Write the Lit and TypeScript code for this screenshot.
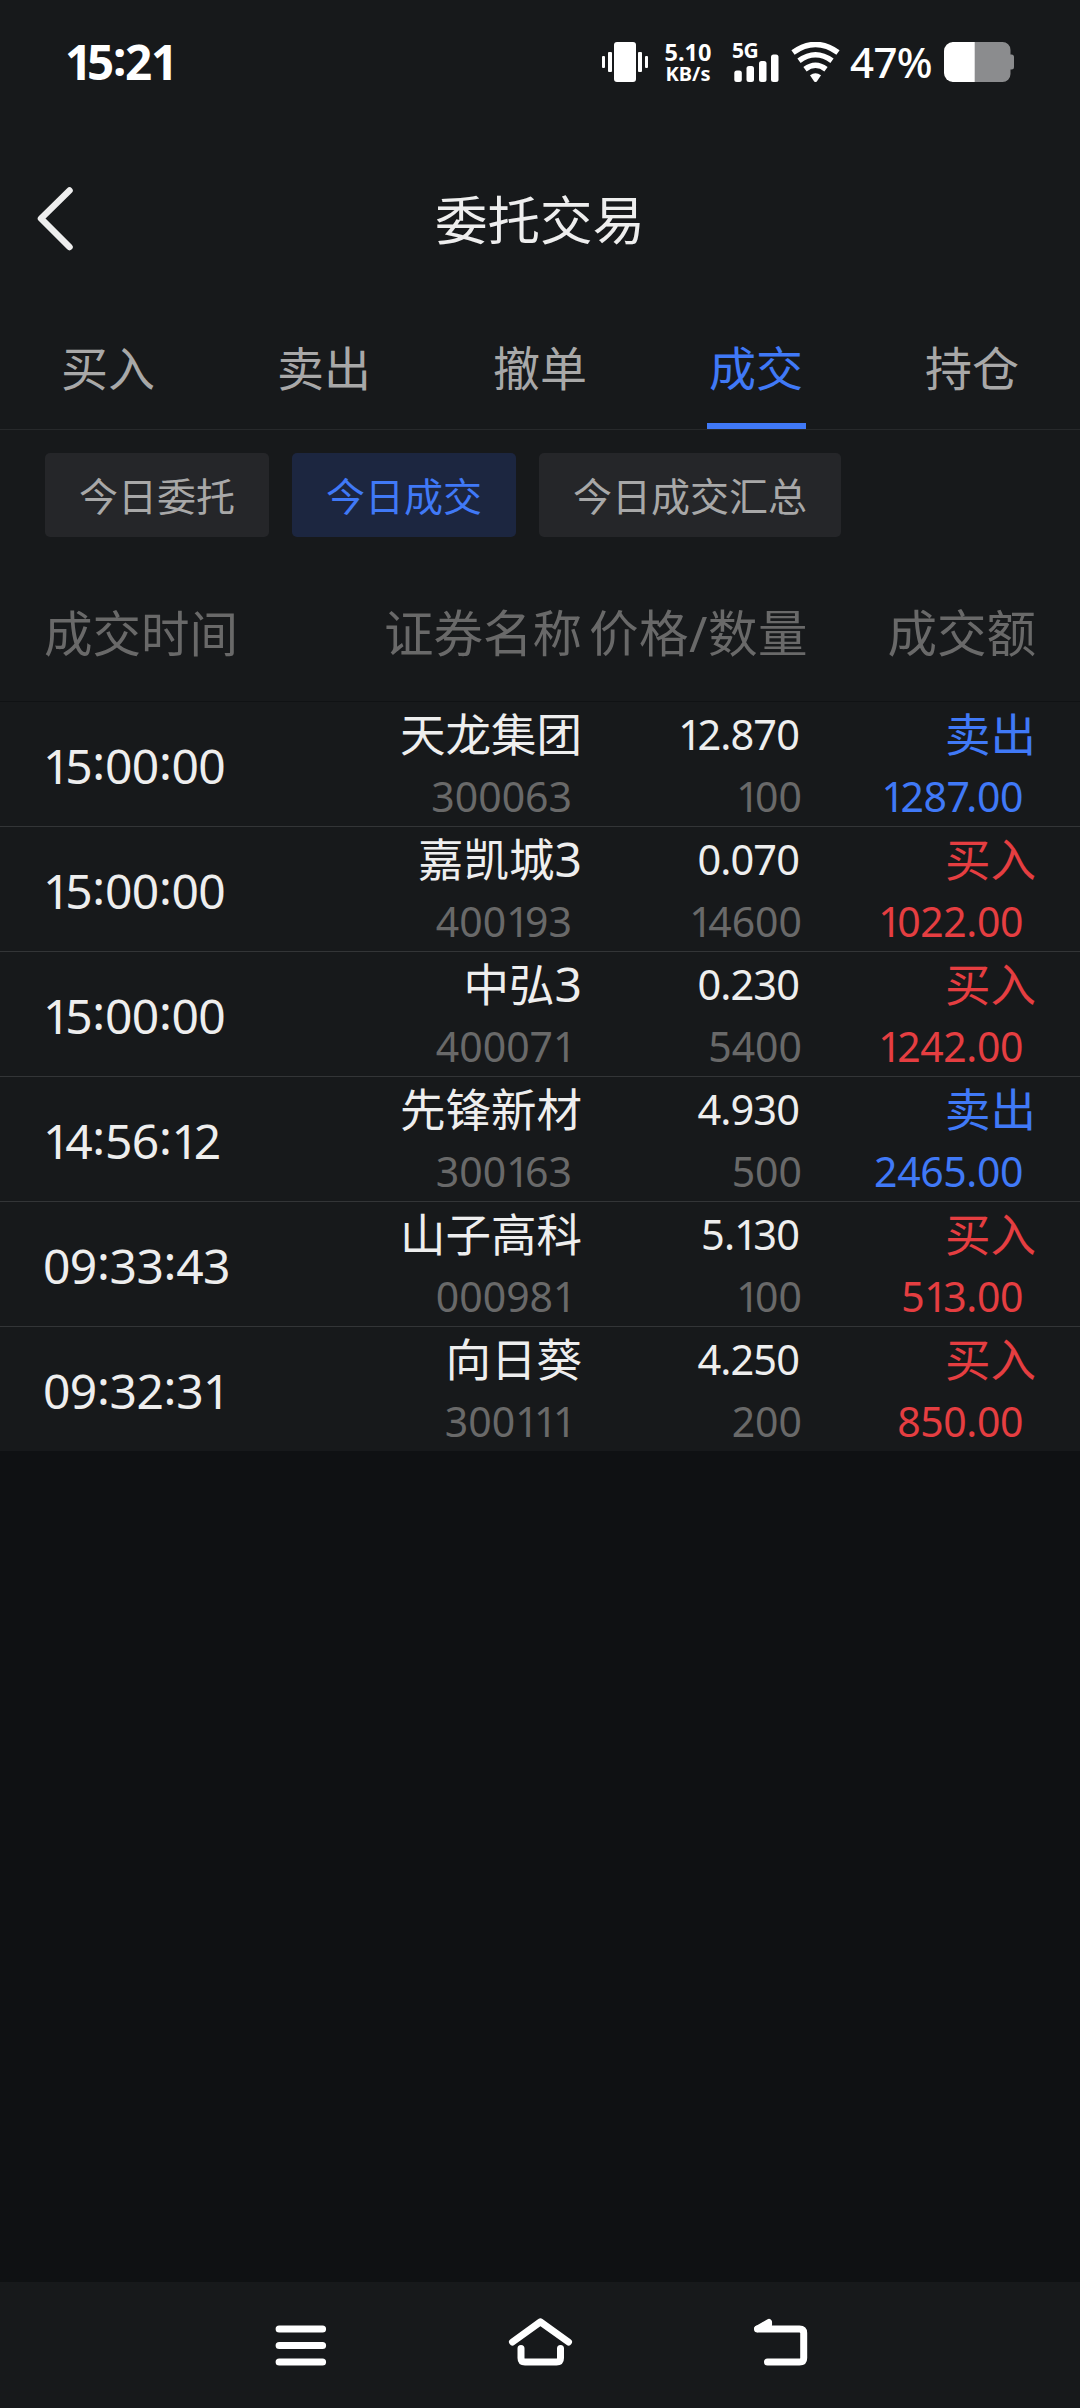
import { LitElement, html, css } from "lit";
import { customElement, property } from "lit/decorators.js";
import { classMap } from "lit/directives/class-map.js";

type Side = "buy" | "sell";

interface Trade {
  time: string;
  name: string;
  code: string;
  price: string;
  volume: string;
  side: Side;
  amount: string;
}

const TABS = ["买入", "卖出", "撤单", "成交", "持仓"];
const FILTERS = ["今日委托", "今日成交", "今日成交汇总"];
const TRADES: Trade[] = [
  { time: "15:00:00", name: "天龙集团", code: "300063", price: "12.870", volume: "100", side: "sell", amount: "1287.00" },
  { time: "15:00:00", name: "嘉凯城3", code: "400193", price: "0.070", volume: "14600", side: "buy", amount: "1022.00" },
  { time: "15:00:00", name: "中弘3", code: "400071", price: "0.230", volume: "5400", side: "buy", amount: "1242.00" },
  { time: "14:56:12", name: "先锋新材", code: "300163", price: "4.930", volume: "500", side: "sell", amount: "2465.00" },
  { time: "09:33:43", name: "山子高科", code: "000981", price: "5.130", volume: "100", side: "buy", amount: "513.00" },
  { time: "09:32:31", name: "向日葵", code: "300111", price: "4.250", volume: "200", side: "buy", amount: "850.00" },
];

/** Proportional figures: "1" and "7." are set tighter, ":" is raised to mid-digit height. */
const figures = (text: string) =>
  text.split(/(1+|:|7(?=\.))/).filter(Boolean).map((part) =>
    part.startsWith("1") ? html`<span class="one">${part}</span>`
      : part === "7" ? html`<span class="seven">7</span>`
      : part === ":" ? html`<span class="colon">:</span>`
      : part);

const figureStyles = css`
  .one { letter-spacing: -0.11em; }
  .seven { letter-spacing: -0.09em; }
  .colon { position: relative; top: -0.08em; }
`;

@customElement("status-bar")
class StatusBar extends LitElement {
  static styles = [figureStyles, css`
    :host { display: flex; align-items: center; height: 124px; padding: 0 66px 0 65px; color: #fff; box-sizing: border-box; }
    .clock { flex: 1; font-size: 47.5px; font-weight: 700; line-height: 60px; letter-spacing: -1.2px; }
    .vibrate { margin-right: 16px; }
    .rate { display: flex; flex-direction: column; width: 48px; font: 700 20px/20px "Noto Sans", sans-serif; text-align: center; margin-right: 20px; white-space: nowrap; }
    .rate .value { font-size: 23.5px; line-height: 24px; }
    .signal { width: 47px; height: 40px; position: relative; margin-right: 12px; }
    .net { position: absolute; left: 0; top: -4px; font: 700 21px/24px "Noto Sans", sans-serif; letter-spacing: -0.5px; }
    .percent { font: 500 42px/50px "Noto Sans", sans-serif; width: 83px; margin: 0 11px 0 10px; letter-spacing: -0.6px; }
    svg { display: block; flex: none; }
  `];

  render() {
    return html`
      <div class="clock">${figures("15:21")}</div>
      <svg class="vibrate" width="46" height="40" viewBox="0 0 46 40" fill="#fff">
        <rect x="12" width="22" height="40" rx="3" />
        <rect x="6" y="10" width="4" height="20" rx="1" /><rect x="0" y="14" width="3" height="12" rx="1" />
        <rect x="36" y="10" width="4" height="20" rx="1" /><rect x="43" y="14" width="3" height="12" rx="1" />
      </svg>
      <div class="rate"><div class="value">5.10</div><div>KB/s</div></div>
      <div class="signal">
        <svg width="47" height="40" viewBox="0 0 47 40" fill="#fff">
          <rect x="2.3" y="28.5" width="7.5" height="11.5" rx="2.5" />
          <rect x="14.5" y="24" width="7.5" height="16" rx="2.5" />
          <rect x="27" y="19" width="7.5" height="21" rx="2.5" />
          <rect x="39" y="12.5" width="7.5" height="27.5" rx="2.5" />
        </svg>
        <span class="net">5G</span>
      </div>
      <svg width="49" height="40" viewBox="0 0 49 40" fill="none" stroke="#fff" stroke-width="5.5">
        <path d="M2 10.500Q24.500-5.600 47 10.500" />
        <path d="M8 18.800Q24.500 6.800 41 18.800" />
        <path d="M14 27.200Q24.500 19.400 35 27.200" />
        <path d="M19 33.200Q24.500 29.400 30 33.200L26 39.200Q24.500 41 23 39.200Z" fill="#fff" stroke="none" />
      </svg>
      <div class="percent">47%</div>
      <svg width="70" height="40" viewBox="0 0 70 40">
        <path d="M8 0H58.500a8 8 0 0 1 8 8V12.500H67.500a2.500 2.500 0 0 1 2.500 2.500V25a2.500 2.500 0 0 1-2.500 2.500H66.500V32a8 8 0 0 1-8 8H8Z" fill="#8b8c8e" />
        <path d="M9 0H30.700V40H9a9 9 0 0 1-9-9V9a9 9 0 0 1 9-9Z" fill="#fff" />
      </svg>
    `;
  }
}

@customElement("trade-row")
class TradeRow extends LitElement {
  @property({ attribute: false }) trade!: Trade;

  static styles = [figureStyles, css`
    :host { display: grid; grid-template-columns: 300px 238px 226px 228px; height: 125px; padding: 0 44px; box-sizing: border-box; border-bottom: 1px solid #333537; color: #eee; }
    :host(:last-of-type) { border-bottom-color: transparent; }
    .time { font-size: 48px; line-height: 128px; letter-spacing: -0.6px; margin-left: -1px; }
    .time .colon { margin: 0 0.3px; }
    .cell { text-align: right; white-space: nowrap; line-height: 65px; font-size: 45.500px; }
    .top, .bottom { height: 62px; }
    .price { font-size: 41.500px; padding-right: 9px; letter-spacing: -0.9px; }
    .bottom { font-size: 41px; color: #696969; line-height: 65px; }
    .num { font-size: 48px; line-height: 1; }
    .code { padding-right: 10px; }
    .volume { padding-right: 6px; }
    .amount { padding-right: 13px; letter-spacing: -0.4px; }
    .sell, .sell .bottom { color: #4079f7; }
    .buy, .buy .bottom { color: #e53e41; }
  `];

  render() {
    const t = this.trade;
    return html`
      <div class="time">${figures(t.time)}</div>
      <div class="cell">
        <div class="top">${t.name.replace("3", "")}${t.name.endsWith("3") ? html`<span class="num">3</span>` : ""}</div>
        <div class="bottom code">${figures(t.code)}</div>
      </div>
      <div class="cell">
        <div class="top price">${figures(t.price)}</div>
        <div class="bottom volume">${figures(t.volume)}</div>
      </div>
      <div class="cell ${classMap({ [t.side]: true })}">
        <div class="top">${t.side === "sell" ? "卖出" : "买入"}</div>
        <div class="bottom amount">${figures(t.amount)}</div>
      </div>
    `;
  }
}

@customElement("app-root")
class AppRoot extends LitElement {
  static styles = css`
    :host { display: flex; flex-direction: column; width: 1080px; height: 2408px; background: #0f1113; overflow: hidden; font-family: "Noto Sans", "Noto Sans CJK SC", sans-serif; }
    .panel { background: #17191b; }
    .header { display: grid; grid-template-columns: 76px 1fr 76px; align-items: center; height: 190px; }
    .back { display: block; margin-left: 34px; }
    .title { margin: 0; padding-top: 2px; text-align: center; font-size: 52.500px; font-weight: 400; line-height: 70px; color: #eee; }
    .tabs { display: grid; grid-template-columns: repeat(5, 1fr); height: 115px; border-bottom: 1px solid #27292b; }
    .tab { display: flex; flex-direction: column; align-items: center; justify-content: space-between; font-size: 47px; line-height: 108px; color: #a8a8a8; }
    .tab.active { color: #4079f7; }
    .tab.active::after { content: ""; width: 99px; height: 6px; background: #4079f7; }
    .filters { display: flex; gap: 23px; padding: 23px 45px; height: 84px; }
    .chip { padding: 0 34px; border-radius: 5px; background: #252629; color: #a8a8a8; font-size: 39px; line-height: 86px; }
    .chip.active { background: #1c2640; color: #4079f7; }
    .columns { display: grid; grid-template-columns: 300px 238px 226px 228px; height: 141px; padding: 0 44px; border-bottom: 1px solid #101214; font-size: 49.500px; line-height: 146px; color: #696969; text-align: right; white-space: nowrap; }
    .columns .first { text-align: left; font-size: 48.500px; }
    .columns .price { letter-spacing: 0.5px; }
    .rows { display: flex; flex-direction: column; height: 749px; overflow: hidden; }
    .rows trade-row { flex: none; }
    .nav { display: flex; justify-content: center; margin-top: auto; height: 126px; }
    .nav svg { display: block; width: 240px; height: 126px; }
  `;

  render() {
    return html`
      <div class="panel">
        <status-bar></status-bar>
        <div class="header">
          <svg class="back" width="42" height="66" viewBox="0 0 42 66" fill="none" stroke="#eee" stroke-width="6.500" stroke-linecap="round" stroke-linejoin="round">
            <path d="M35.500 4.500L7 32.500L35.500 61" />
          </svg>
          <h1 class="title">委托交易</h1>
        </div>
        <div class="tabs">
          ${TABS.map((label) => html`<div class=${classMap({ tab: true, active: label === "成交" })}>${label}</div>`)}
        </div>
        <div class="filters">
          ${FILTERS.map((label) => html`<div class=${classMap({ chip: true, active: label === "今日成交" })}>${label}</div>`)}
        </div>
        <div class="columns">
          <div class="first">成交时间</div><div>证券名称</div><div class="price">价格/数量</div><div>成交额</div>
        </div>
        <div class="rows">
          ${TRADES.map((trade) => html`<trade-row .trade=${trade}></trade-row>`)}
        </div>
      </div>
      <div class="panel nav">
        <svg viewBox="180 0 240 126" stroke="#fff" stroke-width="7.200" stroke-linecap="round" fill="none">
          <path d="M279.200 47H322.500M279.200 63.500H322.500M279.200 80H322.500" />
        </svg>
        <svg viewBox="420 0 240 126" stroke="#fff" stroke-width="7" stroke-linecap="round" stroke-linejoin="round" fill="none">
          <path d="M512.500 60L540.400 39.800L568.500 60" />
          <path d="M521 66.500V76Q521 80 525 80H556.500Q560.500 80 560.500 76V66.500" />
        </svg>
        <svg viewBox="660 0 240 126" stroke="#fff" stroke-width="7" stroke-linecap="round" stroke-linejoin="round" fill="none">
          <path d="M757.500 47H799.500Q803.700 47 803.700 51V76Q803.700 80 799.500 80H767.500" />
          <path d="M757.500 46.800L768.800 40.200V43Z" stroke-width="6.500" fill="#fff" />
        </svg>
      </div>
    `;
  }
}
